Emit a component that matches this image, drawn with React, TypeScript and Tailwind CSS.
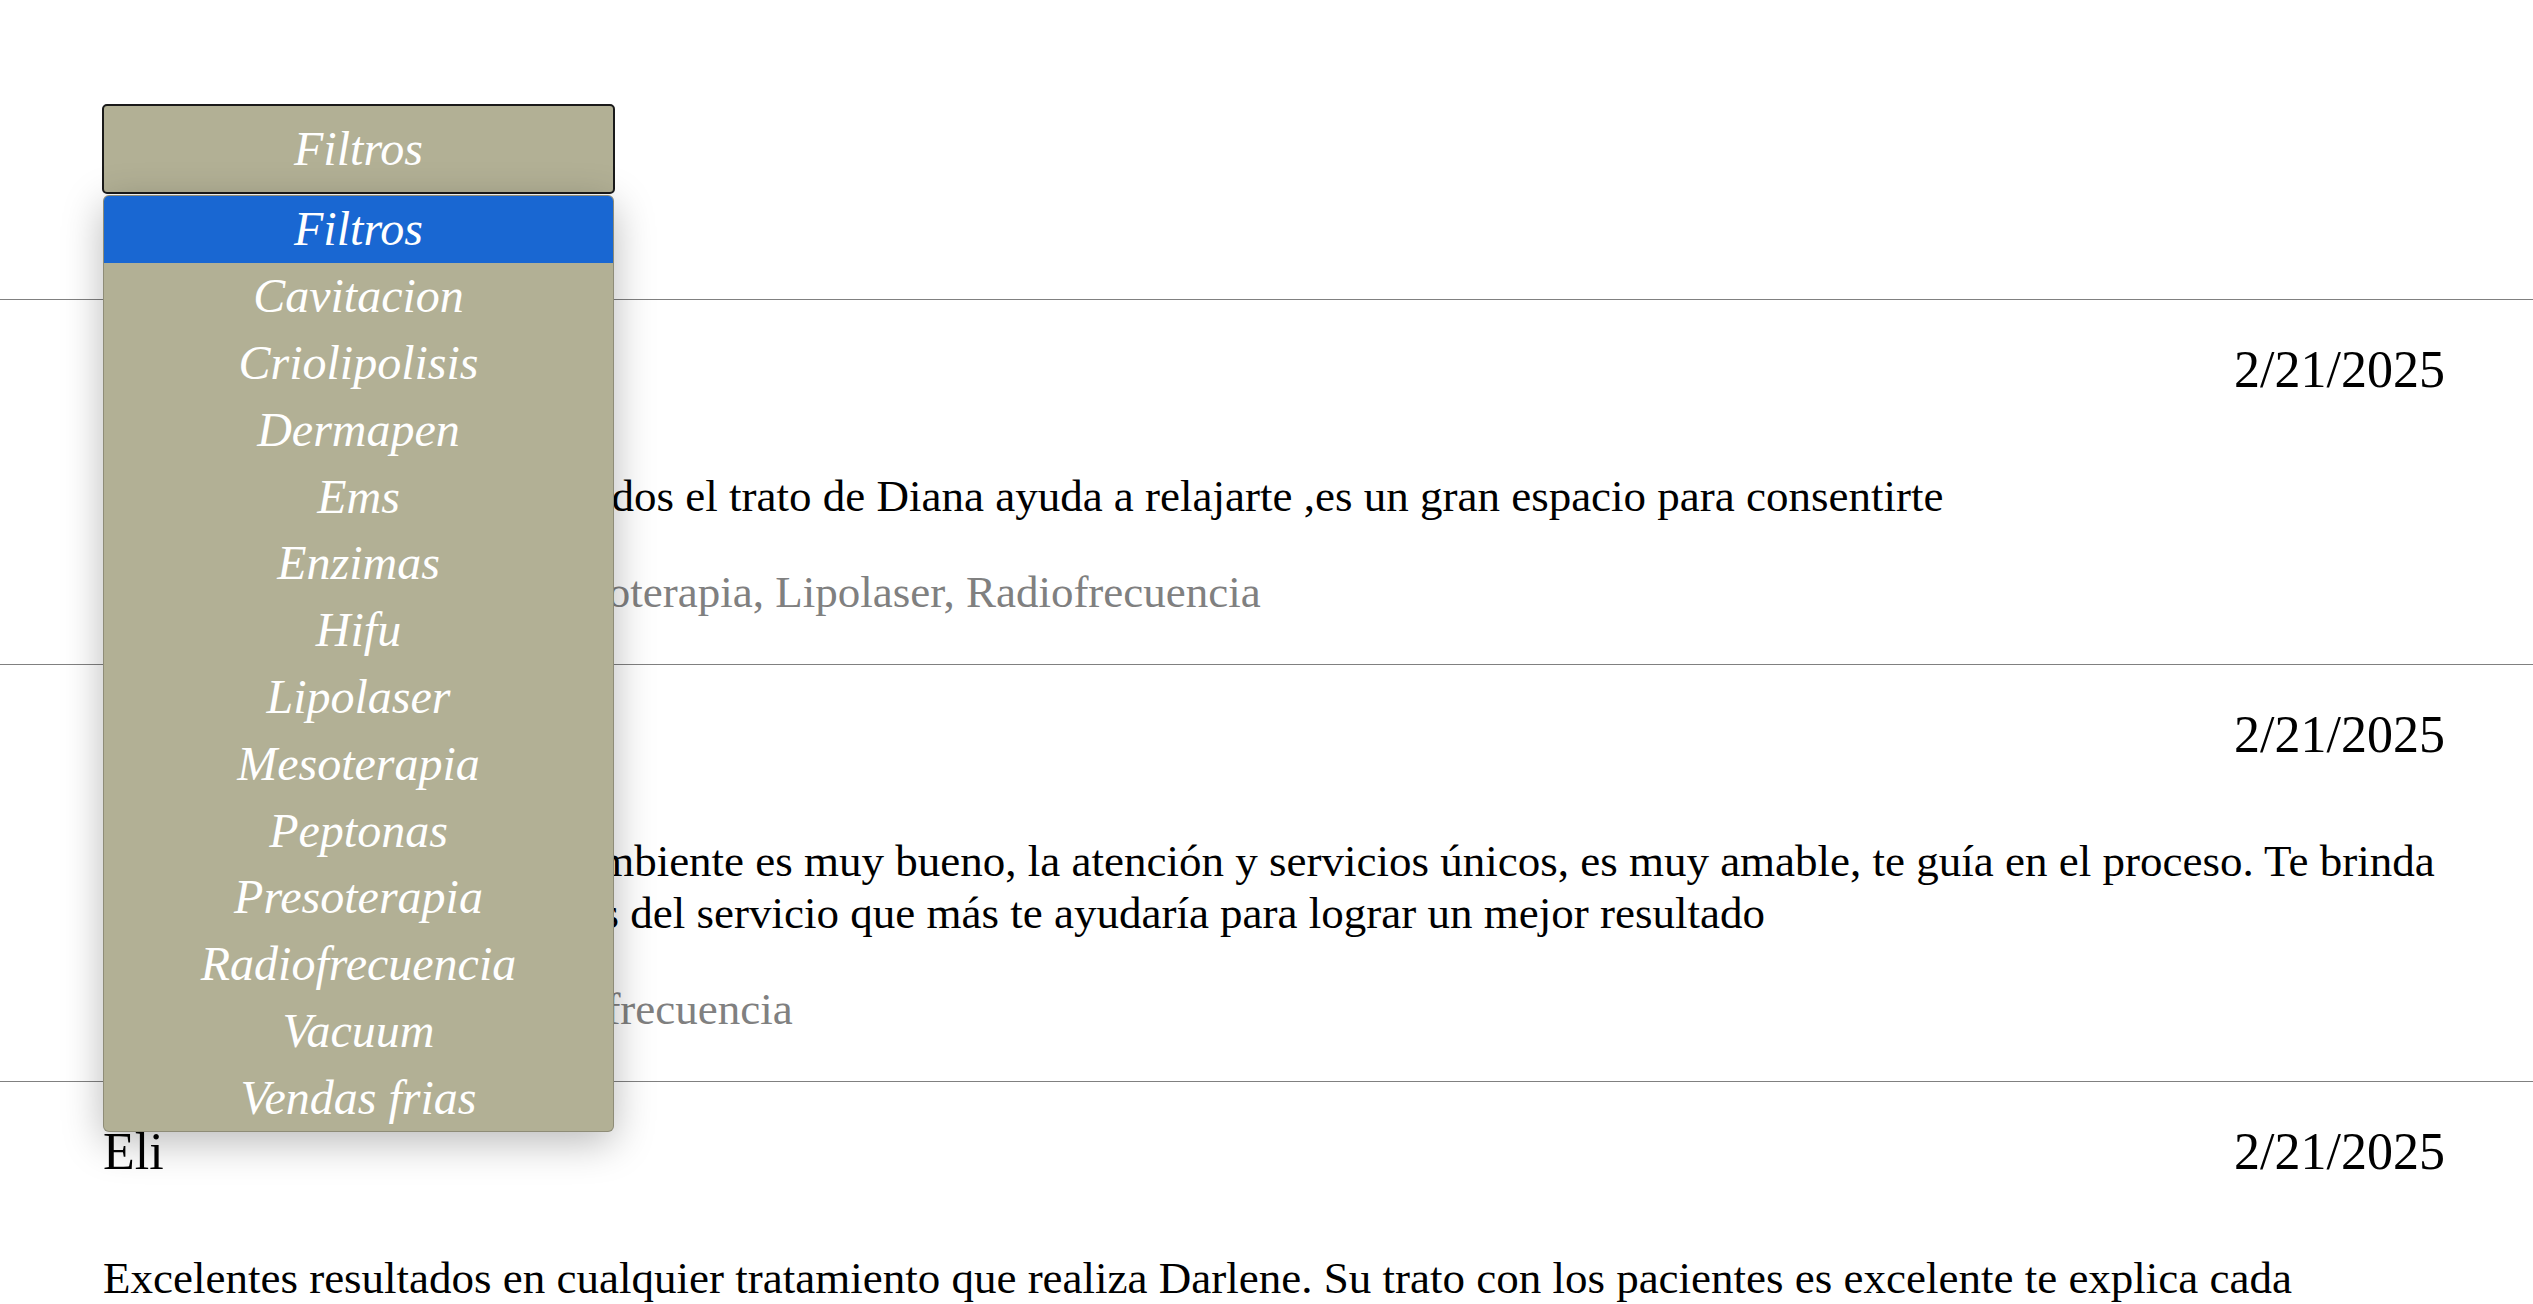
import React from 'react'

const opciones = [
    'Filtros',
    'Cavitacion',
    'Criolipolisis',
    'Dermapen',
    'Ems',
    'Enzimas',
    'Hifu',
    'Lipolaser',
    'Mesoterapia',
    'Peptonas',
    'Presoterapia',
    'Radiofrecuencia',
    'Vacuum',
    'Vendas frias',
]

const resenas = [
    {
        nombre: 'Karla',
        fecha: '2/21/2025',
        texto: 'Excelentes servicios, resultados el trato de Diana ayuda a relajarte ,es un gran espacio para consentirte',
        servicios: 'Cavitacion, Dermapen, Mesoterapia, Lipolaser, Radiofrecuencia',
    },
    {
        nombre: 'Mariana',
        fecha: '2/21/2025',
        texto: 'El lugar es muy bonito, el ambiente es muy bueno, la atención y servicios únicos, es muy amable, te guía en el proceso. Te brinda información de las bondades del servicio que más te ayudaría para lograr un mejor resultado',
        servicios: 'Dermapen, Peptonas, Radiofrecuencia',
    },
    {
        nombre: 'Eli',
        fecha: '2/21/2025',
        texto: 'Excelentes resultados en cualquier tratamiento que realiza Darlene. Su trato con los pacientes es excelente te explica cada procedimiento y los cuidados que debes tener después de cada sesión.',
        servicios: 'Hifu, Enzimas',
    },
]

const App = () => {
    return (
        <div className="relative min-h-screen bg-white text-black font-['Liberation_Serif',serif]">
            {/* Select de filtros */}
            <div className="pt-[104px] pb-[105px] pl-[102px]">
                <button className="w-[513px] h-[90px] rounded-[5px] border-2 border-[#1a1a1a] bg-[#b2b095] text-white italic text-[48px] leading-none">
                    Filtros
                </button>
            </div>

            {/* Lista desplegada */}
            <div className="absolute top-[195px] left-[103px] z-10 w-[511px] overflow-hidden rounded-[6px] border border-black/20 bg-[#b2b095] shadow-[0_10px_40px_rgba(0,0,0,0.28)]">
                {opciones.map((op, i) => (
                    <div
                        key={op}
                        className={
                            i === 0
                                ? 'h-[66.8px] flex items-center justify-center bg-[#1967d2] text-white italic text-[48px]'
                                : 'h-[66.8px] flex items-center justify-center text-white italic text-[48px]'
                        }
                    >
                        {op}
                    </div>
                ))}
            </div>

            {/* Reseñas */}
            {resenas.map((r) => (
                <div key={r.nombre} className="border-t border-[#808080] pl-[103px] pr-[88px] pt-[40px] pb-[46px]">
                    <div className="flex justify-between text-[52px] leading-[60px]">
                        <span>{r.nombre}</span>
                        <span>{r.fecha}</span>
                    </div>
                    <p className="mt-[70px] text-[45px] leading-[52px]">{r.texto}</p>
                    <p className="mt-[44px] text-[45px] leading-[52px] text-[#808080]">{r.servicios}</p>
                </div>
            ))}
        </div>
    )
}

export default App
